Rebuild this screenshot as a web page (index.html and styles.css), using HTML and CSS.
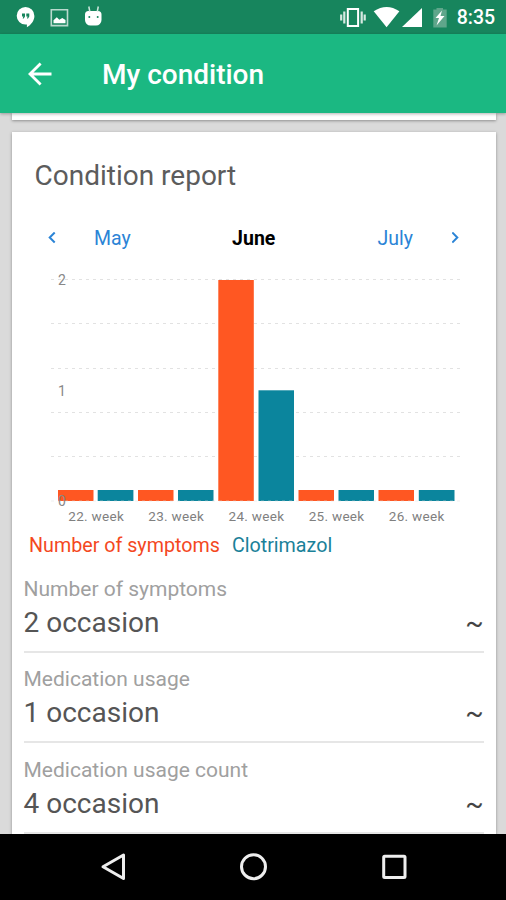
FILE: index.html
```html
<!DOCTYPE html>
<html lang="en">
<head>
    <meta charset="UTF-8">
    <meta name="viewport" content="width=device-width, initial-scale=1.0">
    <title>My condition</title>
    <link rel="stylesheet" href="styles.css">
</head>
<body>
    <div class="phone">
        <div class="status-bar">
            <svg class="status-left" width="120" height="34" viewBox="0 0 120 34">
                <path fill="#fff" d="M25.500 7a8.900 8.900 0 0 1 8.900 8.900c0 4.500-3.300 8.900-7.500 11.300v-2.600h-1.400a8.800 8.800 0 0 1 0-17.600z"/>
                <path fill="#17855d" d="M22 13.500h3v3l-1.300 2h-1l.6-2H22zM26.300 13.500h3v3l-1.300 2h-1l.6-2h-1.300z"/>
                <path fill="none" stroke="#b9d9cd" stroke-width="1.600" d="M51.300 9.800h16.200v15.800H51.300z"/>
                <path fill="#fff" d="M53.500 23.300v-3l3.300-3 2.500 2.500 3-1.700 3.200 2v3.200z"/>
                <path fill="#fff" d="M85 14.500a3.500 3.500 0 0 1 3.500-3.500h9.500a3.500 3.500 0 0 1 3.500 3.500v5.500a5.500 5.500 0 0 1-5.500 5.500h-5.500a5.500 5.500 0 0 1-5.500-5.500z"/>
                <path fill="none" stroke="#cfe6dd" stroke-width="1.500" d="M88.800 6.500l1 5M98.300 6.500l-1 5"/>
                <circle fill="#17855d" cx="89.300" cy="17" r="1"/>
                <circle fill="#17855d" cx="97.700" cy="17" r="1"/>
            </svg>
            <svg class="status-right" width="120" height="34" viewBox="336 0 120 34">
                <path fill="none" stroke="#fff" stroke-width="2" d="M347.800 8.900h10.300v17h-10.300z"/>
                <path fill="none" stroke="#d5e9e1" stroke-width="2.200" d="M344.300 11.500v12M341.200 14.500v6M361.700 11.500v12M364.700 14.500v6"/>
                <path fill="#fff" d="M373.700 11.200q13-8.600 25.700 0L386.600 27.300z"/>
                <path fill="#fff" d="M422 8v19h-20z"/>
                <path fill="#5fa68b" d="M433.300 9.500h3.200V8h6.500v1.500h3.700v18h-13.400z"/>
                <path fill="#fff" d="M442 10.500l-6.500 7.500h3.500l-2.500 7.500 8-9.500h-4z"/>
            </svg>
            <span class="clock">8:35</span>
        </div>

        <div class="toolbar">
            <svg class="back" width="24" height="24" viewBox="0 0 24 24">
                <path fill="none" stroke="#fff" stroke-width="2.800" d="M12.600 1.500L2 12l10.600 10.500M2 12h21.500"/>
            </svg>
            <h1>My condition</h1>
        </div>

        <div class="content">
            <div class="card card-prev"></div>
            <div class="card report">
                <h2>Condition report</h2>

                <div class="months">
                    <svg width="8" height="12" viewBox="0 0 8 12"><path d="M6.700 .5L1.700 5.500l5 5"/></svg>
                    <span class="prev">May</span>
                    <span class="current">June</span>
                    <span class="next">July</span>
                    <svg width="8" height="12" viewBox="0 0 8 12"><path d="M.3 .5l5 5-5 5"/></svg>
                </div>

                <svg class="chart" width="484" height="265" viewBox="12 265 484 265">
                    <g class="grid">
                        <path d="M51 279.500h411M51 323.500h411M51 368.500h411M51 412.500h411M51 456.500h411"/>
                    </g>
                    <g class="symptoms">
                        <rect x="58" y="490" width="35.500" height="11"/>
                        <rect x="138" y="490" width="35.500" height="11"/>
                        <rect x="218.300" y="280" width="35.500" height="221"/>
                        <rect x="298.500" y="490" width="35.500" height="11"/>
                        <rect x="378.500" y="490" width="35.500" height="11"/>
                    </g>
                    <g class="medication">
                        <rect x="97.700" y="490" width="35.700" height="11"/>
                        <rect x="178" y="490" width="35.500" height="11"/>
                        <rect x="258.500" y="390.300" width="35.500" height="110.700"/>
                        <rect x="338.500" y="490" width="35.500" height="11"/>
                        <rect x="418.800" y="490" width="35.700" height="11"/>
                    </g>
                    <path class="base" d="M51 501h411"/>
                    <g class="y-axis">
                        <text x="58" y="285">2</text>
                        <text x="58" y="395.500">1</text>
                        <text x="58" y="506">0</text>
                    </g>
                    <g class="x-axis">
                        <text x="96.200" y="521">22. week</text>
                        <text x="176.200" y="521">23. week</text>
                        <text x="256.400" y="521">24. week</text>
                        <text x="336.600" y="521">25. week</text>
                        <text x="416.700" y="521">26. week</text>
                    </g>
                </svg>

                <div class="legend">
                    <span class="legend-symptoms">Number of symptoms</span>
                    <span class="legend-medication">Clotrimazol</span>
                </div>

                <ul class="stats">
                    <li>
                        <p class="label">Number of symptoms</p>
                        <p class="value"><span>2 occasion</span><span class="trend">~</span></p>
                    </li>
                    <li>
                        <p class="label">Medication usage</p>
                        <p class="value"><span>1 occasion</span><span class="trend">~</span></p>
                    </li>
                    <li>
                        <p class="label">Medication usage count</p>
                        <p class="value"><span>4 occasion</span><span class="trend">~</span></p>
                    </li>
                </ul>
            </div>
        </div>

        <div class="nav-bar">
            <svg width="506" height="66" viewBox="0 834 506 66">
                <path d="M123.500 855v23.500L103 866.800z"/>
                <circle cx="253.500" cy="866.700" r="12"/>
                <rect x="383.700" y="856.300" width="21.300" height="21.300" rx="1"/>
            </svg>
        </div>
    </div>
</body>
</html>
```
FILE: styles.css
```css
*{
    margin: 0;
    padding: 0;
    box-sizing: border-box;
}
li{
    list-style: none;
}
svg{
    display: block;
    flex: none;
}
body{
    font-family: Roboto, sans-serif;
    background-color: #dadada;
}
.phone{
    width: 506px;
    height: 900px;
    display: flex;
    flex-direction: column;
    overflow: hidden;
}

/* status bar */
.status-bar{
    flex: none;
    height: 34px;
    background-color: #17855d;
    display: flex;
    align-items: center;
}
.status-right{
    margin-left: auto;
}
.clock{
    width: 50px;
    font-size: 19.5px;
    font-weight: 500;
    line-height: 34px;
    padding: 2px 0 0 .7px;
    color: #fff;
}

/* toolbar */
.toolbar{
    flex: none;
    height: 79px;
    padding-left: 28px;
    background-color: #1bb882;
    display: flex;
    align-items: center;
    gap: 50px;
    box-shadow: 0 1px 3px rgba(0,0,0,.3);
    z-index: 1;
}
.toolbar h1{
    font-size: 28px;
    font-weight: 500;
    line-height: 40px;
    padding-top: 2px;
    color: #fff;
}

/* cards */
.content{
    flex: 1;
    min-height: 0;
    overflow: hidden;
    padding: 0 10.500px 0 12px;
}
.card{
    background-color: #fff;
    box-shadow: 0 1px 3px rgba(0,0,0,.35);
}
.card-prev{
    height: 7px;
    margin-bottom: 12px;
}
.report{
    height: 740px;
}
.report h2{
    height: 86px;
    padding: 25px 0 0 22.5px;
    font-size: 28px;
    font-weight: 400;
    line-height: 38px;
    color: #5c5c5c;
}

/* month switcher */
.months{
    height: 40px;
    padding: 0 36px;
    display: flex;
    align-items: center;
    font-size: 19.5px;
    color: #2b84d6;
}
.months svg{
    fill: none;
    stroke: #2b84d6;
    stroke-width: 2;
}
.prev{
    width: 110px;
    padding-left: 38px;
}
.current{
    flex: 1;
    text-align: center;
    font-weight: 700;
    color: #000;
}
.next{
    width: 110px;
    padding-right: 38.5px;
    text-align: right;
}

/* chart */
.chart{
    margin-top: 7px;
}
.grid path,
.base{
    fill: none;
    stroke: #e2e2e2;
    stroke-width: 1;
    stroke-dasharray: 3 4;
}
.base{
    stroke-opacity: .5;
}
.symptoms{
    fill: #ff5722;
}
.medication{
    fill: #0b859d;
}
.y-axis{
    font-size: 14px;
    fill: #888;
}
.x-axis{
    font-size: 13.5px;
    letter-spacing: .3px;
    text-anchor: middle;
    fill: #808080;
}

.legend{
    height: 30px;
    padding-left: 17px;
    display: flex;
    gap: 12px;
    font-size: 19.7px;
    line-height: 32px;
}
.legend-symptoms{
    color: #f4481e;
}
.legend-medication{
    color: #1a8199;
}

/* statistics */
.stats{
    padding: 2px 12px 0 11.500px;
}
.stats li{
    height: 90.500px;
    padding-top: 10.5px;
    border-bottom: 2px solid #e6e6e6;
}
.label{
    font-size: 21px;
    line-height: 32px;
    color: #a0a0a0;
}
.value{
    display: flex;
    justify-content: space-between;
    font-size: 28px;
    line-height: 36px;
    color: #555;
}
.trend{
    font-size: 27px;
    color: #444;
}

/* system navigation */
.nav-bar{
    flex: none;
    height: 66px;
    background-color: #000;
    z-index: 1;
}
.nav-bar svg{
    fill: none;
    stroke: #eee;
    stroke-width: 3;
    stroke-linejoin: round;
}
```
